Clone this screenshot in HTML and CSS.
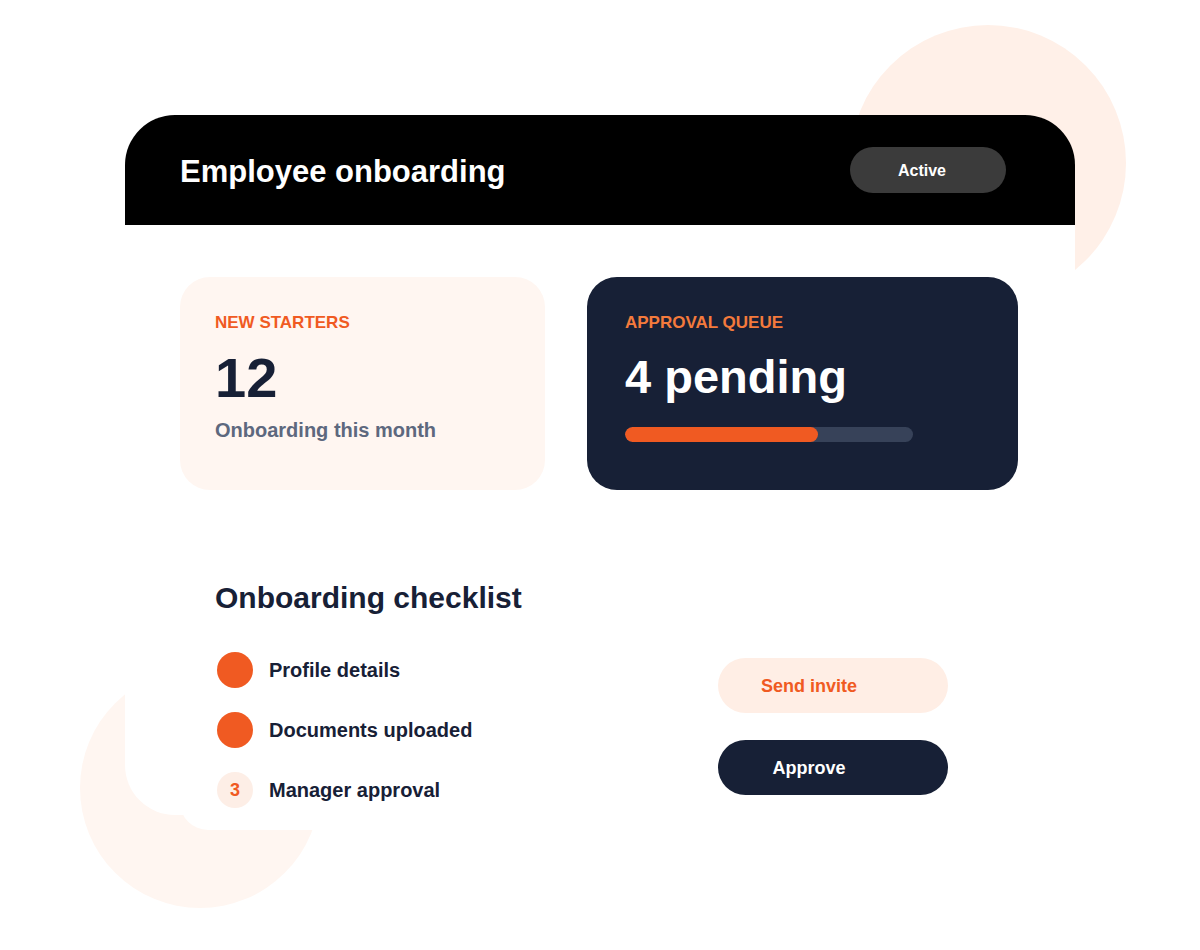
FILE: index.html
```html
<!DOCTYPE html>
<html lang="en">
<head>
<meta charset="utf-8">
<title>Employee onboarding</title>
<link rel="stylesheet" href="styles.css">
</head>
<body>
<div class="blob blob-tr"></div>
<div class="blob blob-bl"></div>
<main class="card">
  <header class="card-head">
    <h1 class="title">Employee onboarding</h1>
    <span class="pill">Active</span>
  </header>
  <div class="card-body">
    <div class="stats">
      <section class="stat stat-light">
        <div class="stat-label">NEW STARTERS</div>
        <div class="stat-num">12</div>
        <div class="stat-sub">Onboarding this month</div>
      </section>
      <section class="stat stat-dark">
        <div class="stat-label stat-label-soft">APPROVAL QUEUE</div>
        <div class="stat-big">4 pending</div>
        <div class="bar"><div class="bar-fill" style="width:67%"></div></div>
      </section>
    </div>
    <section class="checklist">
      <h2 class="check-title">Onboarding checklist</h2>
      <div class="check-row">
        <ul class="steps">
          <li class="step"><span class="dot dot-done"></span><span class="step-text">Profile details</span></li>
          <li class="step"><span class="dot dot-done"></span><span class="step-text">Documents uploaded</span></li>
          <li class="step"><span class="dot dot-todo">3</span><span class="step-text">Manager approval</span></li>
        </ul>
        <div class="actions">
          <button class="btn btn-soft" type="button">Send invite</button>
          <button class="btn btn-dark" type="button">Approve</button>
        </div>
      </div>
    </section>
  </div>
</main>
</body>
</html>
```

FILE: styles.css
```css
* { box-sizing: border-box; }

html, body {
  margin: 0;
  padding: 0;
  background: #ffffff;
}

body {
  font-family: "Liberation Sans", Arial, sans-serif;
  color: #172036;
  width: 1200px;
  height: 950px;
  overflow: hidden;
  position: relative;
}

.blob {
  position: absolute;
  border-radius: 50%;
  z-index: 0;
}

.blob-tr {
  left: 850px;
  top: 25px;
  width: 276px;
  height: 276px;
  background: #fff0e8;
}

.blob-bl {
  left: 80px;
  top: 668px;
  width: 240px;
  height: 240px;
  background: #fff6f1;
}

.card {
  position: relative;
  z-index: 1;
  margin: 115px 0 0 125px;
  width: 950px;
}

.card-head {
  height: 110px;
  background: #000000;
  border-radius: 50px 50px 0 0;
  display: flex;
  align-items: center;
  justify-content: space-between;
  padding: 0 69px 0 55px;
}

.title {
  margin: 0;
  color: #ffffff;
  font-size: 31px;
  font-weight: 700;
  line-height: 36px;
  padding-top: 4px;
}

.pill {
  display: flex;
  align-items: center;
  height: 46px;
  padding: 2px 60px 0 48px;
  border-radius: 23px;
  background: #3b3b3b;
  color: #ffffff;
  font-size: 16px;
  font-weight: 700;
}

.card-body {
  height: 590px;
  background: #ffffff;
  border-radius: 0 0 50px 50px;
  padding-top: 52px;
}

.stats {
  display: flex;
  gap: 42px;
  margin-left: 55px;
}

.stat {
  height: 213px;
  border-radius: 30px;
  padding-top: 36px;
}

.stat-light {
  width: 365px;
  background: #fff6f1;
  padding-left: 35px;
}

.stat-dark {
  width: 431px;
  background: #172036;
  padding-left: 38px;
}

.stat-label {
  font-size: 17px;
  font-weight: 700;
  line-height: 20px;
  color: #f05a22;
}

.stat-label-soft {
  color: #f47a3c;
}

.stat-num {
  margin-top: 17px;
  font-size: 56px;
  font-weight: 700;
  line-height: 56px;
  color: #172036;
}

.stat-sub {
  margin-top: 12px;
  font-size: 20px;
  font-weight: 700;
  line-height: 24px;
  color: #5d687e;
}

.stat-big {
  margin-top: 20px;
  font-size: 47px;
  font-weight: 700;
  line-height: 47px;
  color: #ffffff;
}

.bar {
  margin-top: 27px;
  width: 288px;
  height: 15px;
  border-radius: 8px;
  background: #374259;
  overflow: hidden;
}

.bar-fill {
  height: 100%;
  border-radius: 8px;
  background: #f05a22;
}

.checklist {
  margin: 60px 0 0 55px;
  width: 838px;
  background: #ffffff;
  border-radius: 28px;
  padding: 30px 35px 22px 35px;
}

.check-title {
  margin: 0 0 36px 0;
  font-size: 30px;
  font-weight: 700;
  line-height: 36px;
  color: #172036;
}

.check-row {
  display: grid;
  grid-template-columns: 503px 230px;
  align-items: start;
}

.steps {
  list-style: none;
  margin: 0;
  padding: 0;
  display: flex;
  flex-direction: column;
  gap: 24px;
}

.step {
  display: flex;
  align-items: center;
  gap: 16px;
  height: 36px;
}

.dot {
  width: 36px;
  height: 36px;
  border-radius: 50%;
  margin-left: 2px;
  display: flex;
  align-items: center;
  justify-content: center;
  flex: none;
}

.dot-done {
  background: #f05a22;
}

.dot-todo {
  background: #fdeee6;
  color: #f05a22;
  font-size: 18px;
  font-weight: 700;
}

.step-text {
  font-size: 20px;
  font-weight: 700;
  color: #172036;
}

.actions {
  margin-top: 6px;
  display: flex;
  flex-direction: column;
  gap: 27px;
}

.btn {
  width: 230px;
  height: 55px;
  border: none;
  border-radius: 28px;
  padding: 2px 48px 0 0;
  font-family: "Liberation Sans", Arial, sans-serif;
  font-size: 18px;
  font-weight: 700;
  display: flex;
  align-items: center;
  justify-content: center;
  cursor: pointer;
}

.btn-soft {
  background: #ffeee5;
  color: #f05a22;
}

.btn-dark {
  background: #172036;
  color: #ffffff;
}
```
